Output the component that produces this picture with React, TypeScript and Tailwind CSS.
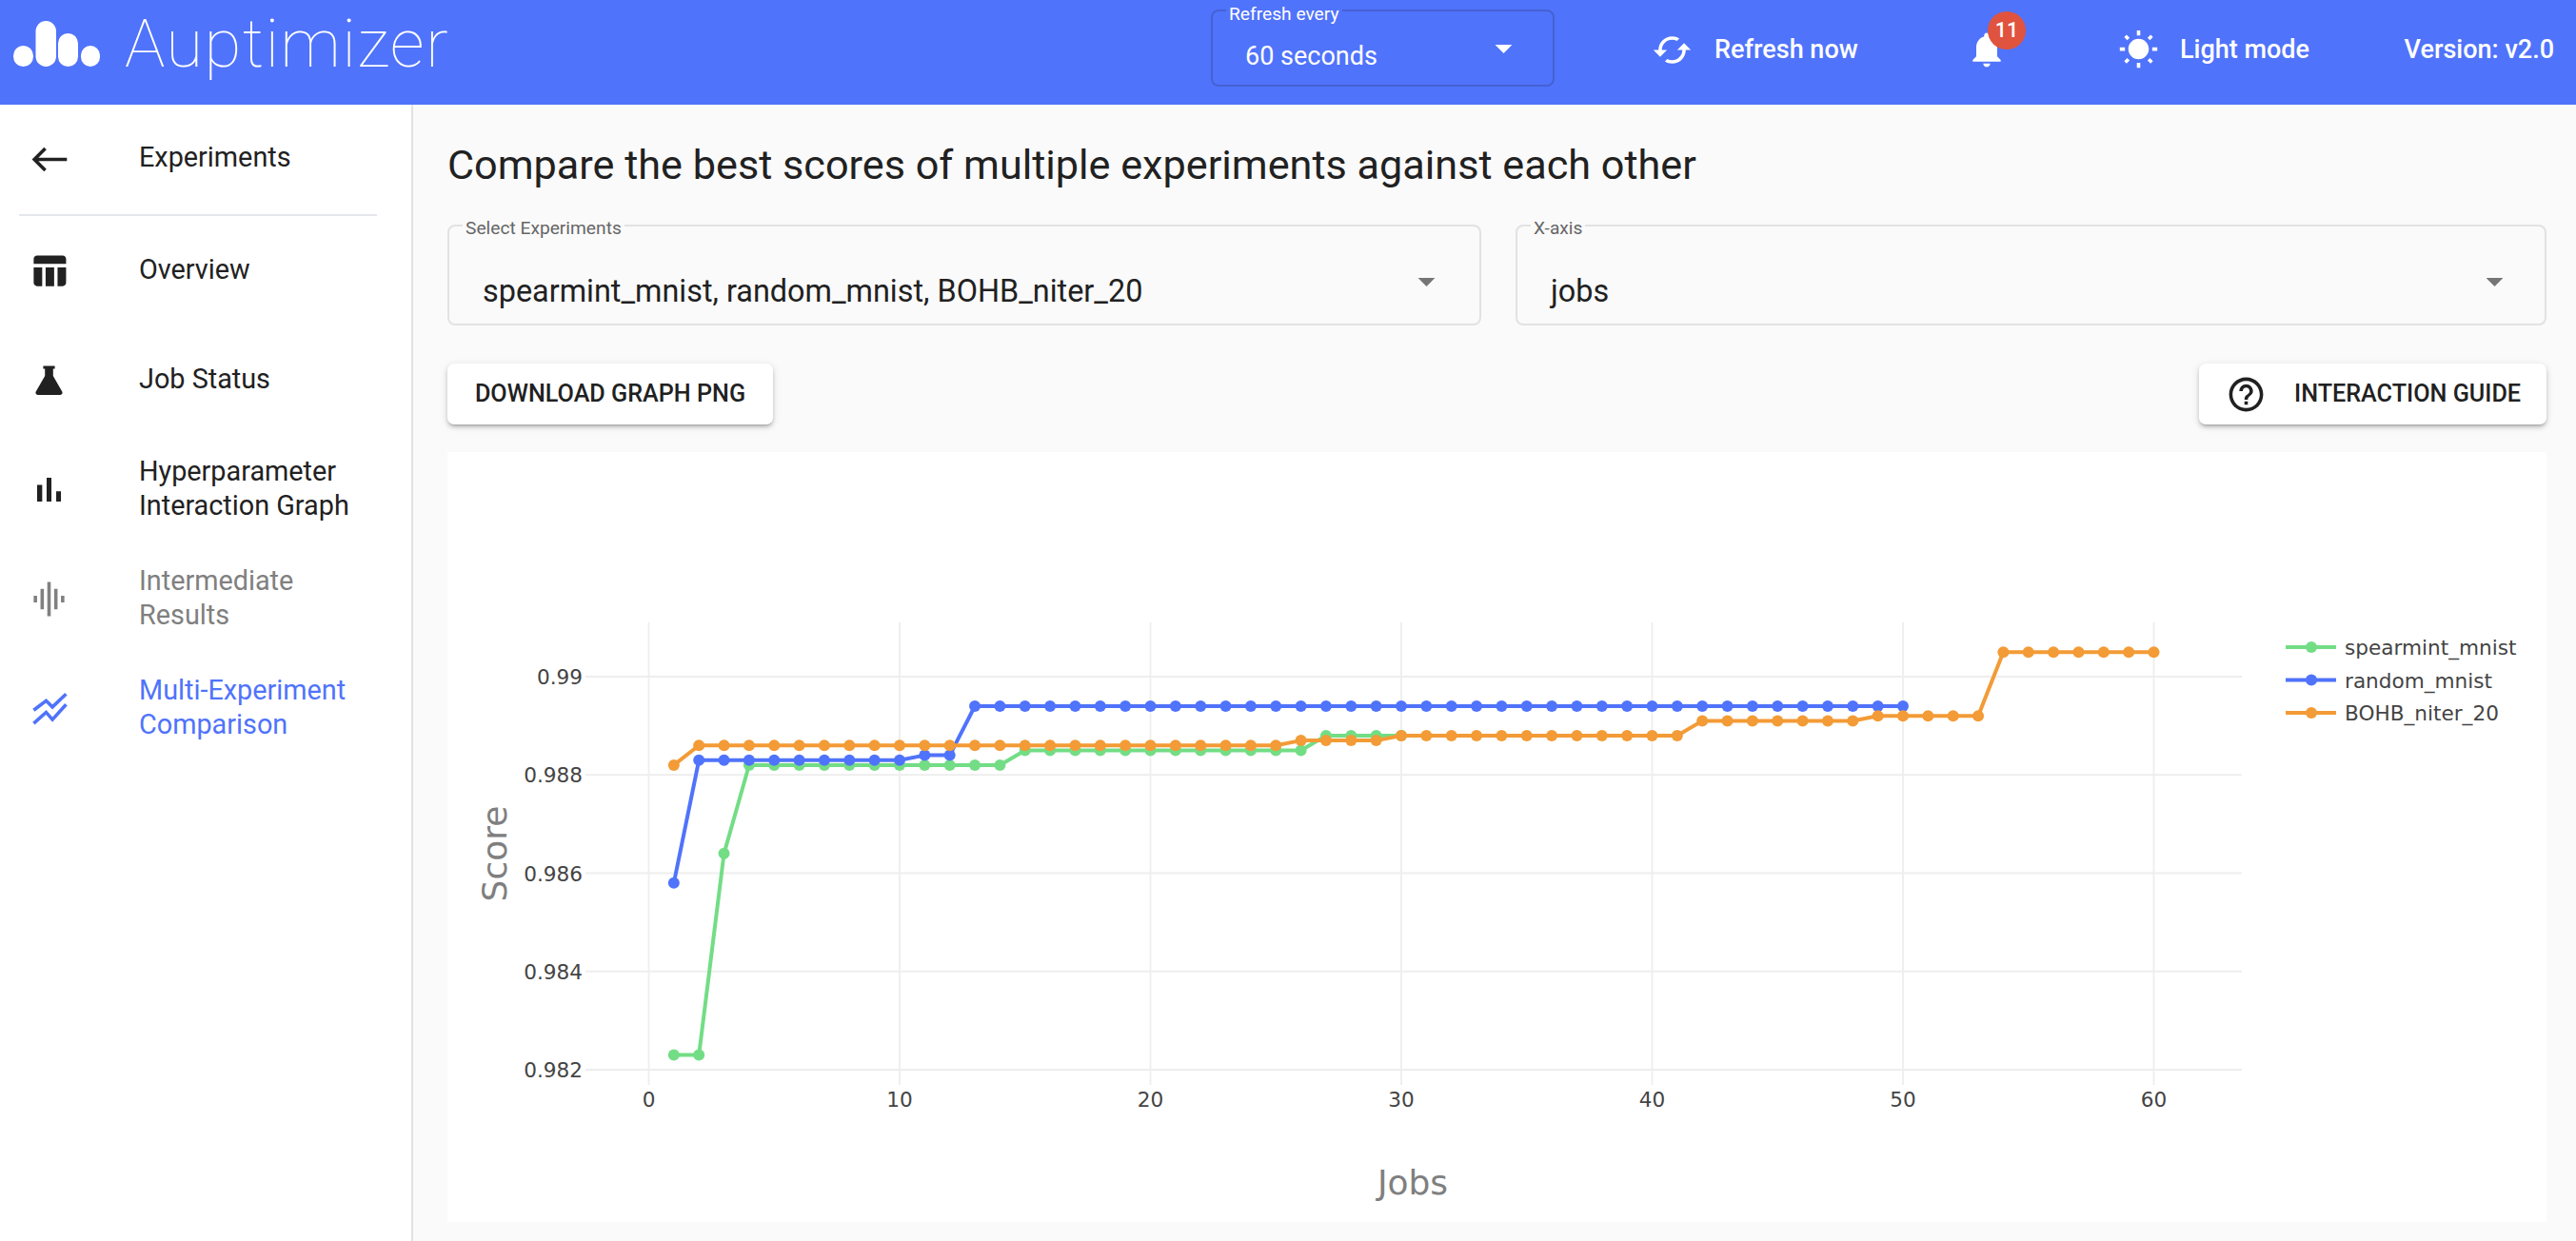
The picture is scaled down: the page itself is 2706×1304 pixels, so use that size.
import type { ReactNode } from 'react';

const ICONS = {
  table: 'M10 10.02h5V21h-5zM17 21h3c1.1 0 2-.9 2-2v-9h-5v11zm3-18H5c-1.1 0-2 .9-2 2v3h19V5c0-1.1-.9-2-2-2zM3 19c0 1.1.9 2 2 2h3V10H3v9z',
  flask: 'M8.6 3.6h6.8v1.7h-1v4.2l5.3 9.2c.5.9-.1 1.9-1.1 1.9H5.4c-1 0-1.6-1-1.1-1.9l5.3-9.2V5.3h-1z',
  bars: 'M5 9.2h3V19H5zM10.6 5h2.8v14h-2.8zm5.6 8H19v6h-2.8z',
  wave: 'M7 18h2V6H7v12zm4 4h2V2h-2v20zm-8-8h2v-4H3v4zm12 4h2V6h-2v12zm4-8v4h2v-4h-2z',
  sync: 'M12 4V1L8 5l4 4V6c3.31 0 6 2.69 6 6 0 1.01-.25 1.97-.7 2.8l1.46 1.46C19.54 15.03 20 13.57 20 12c0-4.42-3.58-8-8-8zm0 14c-3.31 0-6-2.69-6-6 0-1.01.25-1.97.7-2.8L5.24 7.74C4.46 8.97 4 10.43 4 12c0 4.42 3.58 8 8 8v3l4-4-4-4v3z',
  bell: 'M12 22c1.1 0 2-.9 2-2h-4c0 1.1.89 2 2 2zm6-6v-5c0-3.07-1.64-5.64-4.5-6.32V4c0-.83-.67-1.5-1.5-1.5s-1.5.67-1.5 1.5v.68C7.63 5.36 6 7.92 6 11v5l-2 2v1h16v-1l-2-2z',
  sun: 'M6.76 4.84l-1.8-1.79-1.41 1.41 1.79 1.79 1.42-1.41zM4 10.5H1v2h3v-2zm9-9.95h-2V3.5h2V.55zm7.45 3.91l-1.41-1.41-1.79 1.79 1.41 1.41 1.79-1.79zm-3.21 13.7l1.79 1.8 1.41-1.41-1.8-1.79-1.4 1.4zM20 10.5v2h3v-2h-3zm-8-5c-3.31 0-6 2.69-6 6s2.69 6 6 6 6-2.69 6-6-2.69-6-6-6zm-1 16.95h2V19.5h-2v2.95zm-7.45-3.91l1.41 1.41 1.79-1.8-1.41-1.41-1.79 1.8z',
  help: 'M11 18h2v-2h-2v2zm1-16C6.48 2 2 6.48 2 12s4.48 10 10 10 10-4.48 10-10S17.52 2 12 2zm0 18c-4.41 0-8-3.59-8-8s3.59-8 8-8 8 3.59 8 8-3.59 8-8 8zm0-14c-2.21 0-4 1.79-4 4h2c0-1.1.9-2 2-2s2 .9 2 2c0 2-3 1.75-3 5h2c0-2.25 3-2.5 3-5 0-2.21-1.79-4-4-4z',
  drop: 'M7 10l5 5 5-5z',
};

function Icon({ d, className }: { d: string; className?: string }) {
  return (
    <svg viewBox="0 0 24 24" fill="currentColor" className={className}>
      <path d={d} />
    </svg>
  );
}

function Logo() {
  return (
    <svg viewBox="0 0 92 48" className="w-[92px] h-[48px] fill-white">
      <rect x="0" y="26" width="21" height="22" rx="10.5" />
      <rect x="23.5" y="0" width="21.5" height="48" rx="10.7" />
      <rect x="47" y="13" width="21" height="35" rx="10.5" />
      <rect x="71" y="26" width="20" height="22" rx="10" />
    </svg>
  );
}

function NavRow({ icon, children, className }: { icon: ReactNode; children: ReactNode; className: string }) {
  return (
    <div className={`h-[115px] flex items-center ${className}`}>
      <div className="w-[146px] pl-[30px] shrink-0">{icon}</div>
      <div className="text-[28.8px] leading-[36px] -mt-[3px]">{children}</div>
    </div>
  );
}

function Outlined({ label, value, arrowClass }: { label: string; value: string; arrowClass: string }) {
  return (
    <fieldset className="border-2 border-[#e2e2e2] rounded-lg h-[116px] pl-[35px] pr-[37px] flex items-center justify-between">
      <legend className="ml-[-21px] px-[3px] text-[19.2px] leading-[22px] text-[#666666] translate-y-[3px]">{label}</legend>
      <span className="text-[32.4px] leading-[36px] text-[#212121] mt-[23px]">{value}</span>
      <Icon d={ICONS.drop} className={`w-[43px] h-[43px] text-[#757575] mt-[2px] ${arrowClass}`} />
    </fieldset>
  );
}

// best score per job, as [first job, last job, score]
const SERIES = [
  { name: 'spearmint_mnist', color: '#73dd85', runs: [[1, 2, 0.9823], [3, 3, 0.9864], [4, 14, 0.9882], [15, 26, 0.9885], [27, 30, 0.9888]] },
  { name: 'random_mnist', color: '#5073fb', runs: [[1, 1, 0.9858], [2, 10, 0.9883], [11, 12, 0.9884], [13, 50, 0.9894]] },
  { name: 'BOHB_niter_20', color: '#f39b36', runs: [[1, 1, 0.9882], [2, 25, 0.9886], [26, 29, 0.9887], [30, 41, 0.9888], [42, 48, 0.9891], [49, 53, 0.9892], [54, 60, 0.9905]] },
];

const px = (job: number) => 681.5 + job * 26.35;
const py = (score: number) => 711 + ((0.99 - score) / 0.002) * 103.25;

function Chart() {
  const xTicks = [0, 10, 20, 30, 40, 50, 60];
  const yTicks = [0.99, 0.988, 0.986, 0.984, 0.982];
  const font = { fontFamily: '"DejaVu Sans", sans-serif' };
  return (
    <svg viewBox="470 475 2205 809" className="w-[2205px] h-[809px] block bg-white" style={font}>
      {xTicks.map(t => (
        <g key={t}>
          <line x1={px(t)} x2={px(t)} y1={654} y2={1140} stroke="#eeeeee" strokeWidth="1.8" />
          <text x={px(t)} y={1163} textAnchor="middle" fontSize="21.6" fill="#444444">{t}</text>
        </g>
      ))}
      {yTicks.map(t => (
        <g key={t}>
          <line x1={615} x2={2355} y1={py(t)} y2={py(t)} stroke="#eeeeee" strokeWidth="1.8" />
          <text x={612} y={py(t) + 8} textAnchor="end" fontSize="21.6" fill="#444444">{t}</text>
        </g>
      ))}
      {SERIES.map(s => {
        const points: [number, number][] = [];
        s.runs.forEach(([from, to, score]) => {
          for (let j = from; j <= to; j++) points.push([px(j), py(score)]);
        });
        return (
          <g key={s.name} fill={s.color}>
            <polyline points={points.map(p => p.join(',')).join(' ')} fill="none" stroke={s.color} strokeWidth="4" strokeLinejoin="round" />
            {points.map(p => <circle key={p[0]} cx={p[0]} cy={p[1]} r="6" />)}
          </g>
        );
      })}
      {SERIES.map((s, i) => (
        <g key={s.name}>
          <line x1={2401} x2={2454} y1={680 + i * 34.5} y2={680 + i * 34.5} stroke={s.color} strokeWidth="4" />
          <circle cx={2428} cy={680 + i * 34.5} r="6" fill={s.color} />
          <text x={2463} y={688 + i * 34.5} fontSize="21.6" fill="#444444">{s.name}</text>
        </g>
      ))}
      <text x={1484} y={1255} textAnchor="middle" fontSize="36" fill="#7f7f7f">Jobs</text>
      <text transform="translate(532 897) rotate(-90)" textAnchor="middle" fontSize="36" fill="#7f7f7f">Score</text>
    </svg>
  );
}

function PaperButton({ children, className }: { children: ReactNode; className: string }) {
  return (
    <button className={`h-[64px] bg-white rounded-[7px] flex items-center text-[25.2px] font-medium text-[#212121] shadow-[0_3px_3px_-2px_rgba(0,0,0,0.2),0_3px_4px_0_rgba(0,0,0,0.14),0_2px_8px_0_rgba(0,0,0,0.12)] ${className}`}>
      {children}
    </button>
  );
}

export default function App() {
  return (
    <div className="w-[2706px] h-[1304px] overflow-hidden bg-[#fafafa] font-['Roboto',sans-serif] text-[#212121]">
      {/* top bar */}
      <header className="h-[110px] pb-[6px] bg-[#5073fb] text-white flex items-center">
        <div className="flex items-center pl-[14px] w-[1272px] shrink-0 -mt-[12px]">
          <Logo />
          <span className="ml-[25px] text-[71px] leading-[80px] font-thin tracking-[1.3px]">Auptimizer</span>
        </div>
        <fieldset className="w-[361px] h-[91px] shrink-0 border-2 border-[#4561d4] rounded-lg pl-[34px] pr-[51px] flex items-center justify-between -mt-[13px]">
          <legend className="ml-[-20px] px-[3px] text-[19.2px] leading-[22px] translate-y-[4px]">Refresh every</legend>
          <span className="text-[27px] mt-[8px]">60 seconds</span>
          <Icon d={ICONS.drop} className="w-[43px] h-[43px] text-white -mt-[10px] -mr-[21px]" />
        </fieldset>
        <div className="ml-[102px] w-[330px] shrink-0 flex items-center gap-[23px]">
          <Icon d={ICONS.sync} className="w-[43px] h-[43px] rotate-90" />
          <span className="text-[27px] font-medium">Refresh now</span>
        </div>
        <div className="relative w-[160px] shrink-0">
          <Icon d={ICONS.bell} className="w-[44px] h-[44px]" />
          <span className="absolute left-[23px] top-[-18px] w-[40px] h-[40px] rounded-full bg-[#e0533e] flex items-center justify-center text-[21.6px] font-medium">11</span>
        </div>
        <div className="flex items-center gap-[22px] shrink-0">
          <Icon d={ICONS.sun} className="w-[43px] h-[43px]" />
          <span className="text-[27px] font-medium">Light mode</span>
        </div>
        <span className="ml-auto pr-[23px] text-[27px] font-medium">Version: v2.0</span>
      </header>

      <div className="flex h-[1194px]">
        {/* sidebar */}
        <aside className="w-[434px] shrink-0 bg-white border-r-2 border-[#e2e2e2]">
          <div className="h-[115px] flex items-center">
            <div className="w-[146px] pl-[30px] shrink-0">
              <svg viewBox="0 0 24 24" fill="none" stroke="currentColor" strokeWidth="2" className="w-[43px] h-[43px]">
                <path d="M22.5 12H3.6M9.8 5.6 3.4 12 9.8 18.4" />
              </svg>
            </div>
            <span className="text-[28.8px] leading-[36px] -mt-[6px]">Experiments</span>
          </div>
          <div className="h-[2px] ml-[20px] mr-[36px] bg-[#e4e7eb]" />
          <NavRow className="text-[#212121]" icon={<Icon d={ICONS.table} className="w-[43px] h-[43px]" />}>Overview</NavRow>
          <NavRow className="text-[#212121]" icon={<Icon d={ICONS.flask} className="w-[43px] h-[43px]" />}>Job Status</NavRow>
          <NavRow className="text-[#212121]" icon={<Icon d={ICONS.bars} className="w-[43px] h-[43px]" />}>Hyperparameter<br />Interaction Graph</NavRow>
          <NavRow className="text-[#808080]" icon={<Icon d={ICONS.wave} className="w-[43px] h-[43px]" />}>Intermediate<br />Results</NavRow>
          <NavRow
            className="text-[#5073fb]"
            icon={
              <svg viewBox="0 0 24 24" fill="none" stroke="currentColor" strokeWidth="2" className="w-[43px] h-[43px]">
                <path d="M3 13 10.3 7.4 14 11.1 22 3.5" />
                <path d="M3 20.7 10.3 14.2 14 18.5 22 9.6" />
              </svg>
            }
          >
            Multi-Experiment<br />Comparison
          </NavRow>
        </aside>

        {/* main */}
        <main className="w-[2272px] shrink-0 pl-[36px] pr-[31px]">
          <div className="h-[116px] pt-[40px]">
            <h1 className="text-[43.2px] leading-[48px] font-normal">Compare the best scores of multiple experiments against each other</h1>
          </div>
          <div className="grid grid-cols-[1086px_1083px] gap-x-[36px]">
            <Outlined label="Select Experiments" value="spearmint_mnist, random_mnist, BOHB_niter_20" arrowClass="-mr-[3px]" />
            <Outlined label="X-axis" value="jobs" arrowClass="-mr-[6px]" />
          </div>
          <div className="mt-[40px] flex justify-between">
            <PaperButton className="w-[342px] justify-center">DOWNLOAD GRAPH PNG</PaperButton>
            <PaperButton className="w-[365px] pl-[28px]">
              <Icon d={ICONS.help} className="w-[43px] h-[43px]" />
              <span className="ml-[29px]">INTERACTION GUIDE</span>
            </PaperButton>
          </div>
          <div className="mt-[29px]">
            <Chart />
          </div>
        </main>
      </div>
    </div>
  );
}
